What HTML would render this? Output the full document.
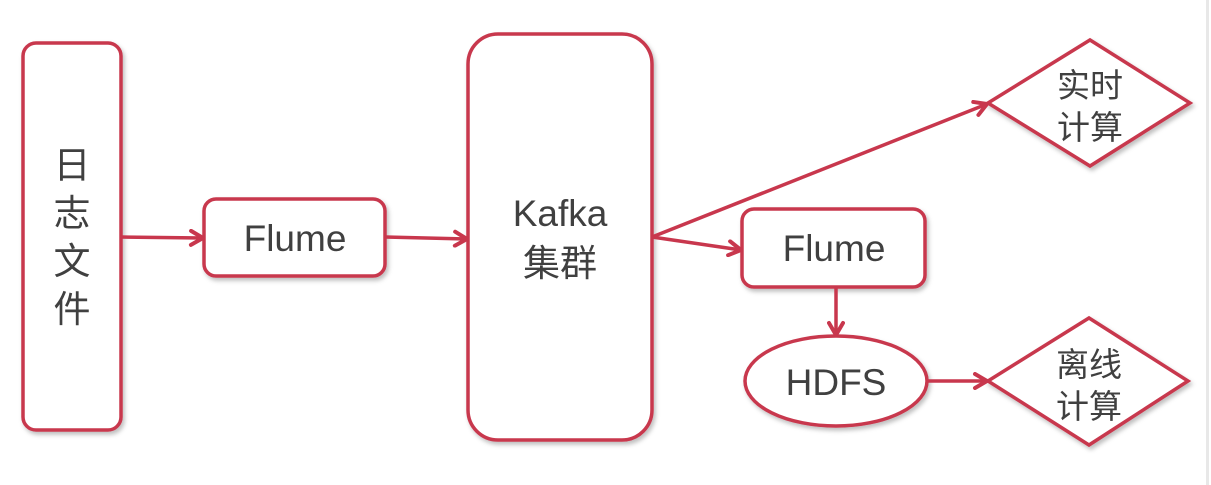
<!DOCTYPE html>
<html><head><meta charset="utf-8"><style>
html,body{margin:0;padding:0;background:#fff;width:1211px;height:485px;overflow:hidden}
text{font-family:"Liberation Sans","Noto Sans CJK SC",sans-serif;fill:#404040}
</style></head><body>
<svg width="1211" height="485" viewBox="0 0 1211 485" xmlns="http://www.w3.org/2000/svg">
<defs>
<filter id="sh" x="-10%" y="-10%" width="130%" height="130%"><feDropShadow dx="2" dy="3" stdDeviation="2" flood-color="#000" flood-opacity="0.25"/></filter>
<marker id="ar" markerWidth="18" markerHeight="18" refX="15" refY="9" orient="auto" markerUnits="userSpaceOnUse"><path d="M3,2 L15,9 L3,16" fill="none" stroke="#c8374d" stroke-width="4" stroke-linecap="round" stroke-linejoin="round"/></marker>
</defs>
<rect x="1206" y="0" width="3" height="485" fill="#e8e8e8"/>
<g fill="#fff" stroke="#c8374d" stroke-width="3.5" filter="url(#sh)">
<rect x="23" y="43" width="98" height="387" rx="13"/>
<rect x="204" y="199" width="181" height="77" rx="12"/>
<rect x="468" y="34" width="184" height="406" rx="30"/>
<rect x="742" y="209" width="183" height="78" rx="12"/>
<ellipse cx="836" cy="381" rx="91" ry="45"/>
<polygon points="988,103 1090,40 1190,103 1090,166"/>
<polygon points="988,381 1089,318 1188,381 1089,445"/>
</g>
<g stroke="#c8374d" stroke-width="3.5" fill="none" marker-end="url(#ar)">
<line x1="121" y1="237" x2="203" y2="238"/>
<line x1="385" y1="237" x2="467" y2="239"/>
<line x1="652" y1="237" x2="987" y2="104"/>
<line x1="652" y1="237" x2="741" y2="250"/>
<line x1="836" y1="287" x2="836" y2="335"/>
<line x1="927" y1="381" x2="987" y2="381"/>
</g>
<g font-size="37" text-anchor="middle">
<text x="72" y="178">日</text><text x="72" y="226">志</text><text x="72" y="274">文</text><text x="72" y="322">件</text>
</g>
<g font-size="37" text-anchor="middle">
<text x="295" y="251">Flume</text>
<text x="834" y="261">Flume</text>
<text x="560" y="226">Kafka</text>
<text x="560" y="276">集群</text>
<text x="836" y="395">HDFS</text>
</g>
<g font-size="33" text-anchor="middle">
<text x="1090" y="97">实时</text><text x="1090" y="139">计算</text>
<text x="1089" y="376">离线</text><text x="1089" y="418">计算</text>
</g>
</svg>
</body></html>
